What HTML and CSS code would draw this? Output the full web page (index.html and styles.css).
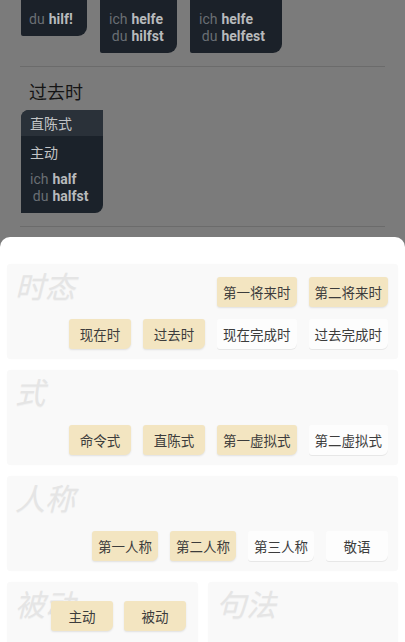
FILE: index.html
```html
<!DOCTYPE html>
<html lang="zh">
<head>
<meta charset="utf-8">
<title>Konjugation</title>
<link rel="stylesheet" href="styles.css">
</head>
<body>
<div class="page">
  <div class="top">
    <div class="forms">
      <div class="fcard c1">
        <div class="conj"><span class="pr">du</span><span class="vb">hilf!</span></div>
      </div>
      <div class="fcard c2">
        <div class="conj"><span class="pr">ich</span><span class="vb">helfe</span><span class="pr">du</span><span class="vb">hilfst</span></div>
      </div>
      <div class="fcard c3">
        <div class="conj"><span class="pr">ich</span><span class="vb">helfe</span><span class="pr">du</span><span class="vb">helfest</span></div>
      </div>
    </div>
    <div class="sep"></div>
    <h2 class="tense">过去时</h2>
    <div class="mood">
      <div class="mood-head">直陈式</div>
      <div class="voice">
        <div class="voice-name">主动</div>
        <div class="conj"><span class="pr">ich</span><span class="vb">half</span><span class="pr">du</span><span class="vb">halfst</span></div>
      </div>
    </div>
    <div class="sep sep2"></div>
  </div>

  <div class="sheet">
    <section class="card tall">
      <div class="card-title">时态</div>
      <div class="chips">
        <span class="chip on">现在时</span>
        <span class="chip on">过去时</span>
        <span class="chip">现在完成时</span>
        <span class="chip">过去完成时</span>
        <span class="chip on">第一将来时</span>
        <span class="chip on">第二将来时</span>
      </div>
    </section>
    <section class="card tall">
      <div class="card-title">式</div>
      <div class="chips">
        <span class="chip on">命令式</span>
        <span class="chip on">直陈式</span>
        <span class="chip on">第一虚拟式</span>
        <span class="chip">第二虚拟式</span>
      </div>
    </section>
    <section class="card tall">
      <div class="card-title">人称</div>
      <div class="chips">
        <span class="chip on">第一人称</span>
        <span class="chip on">第二人称</span>
        <span class="chip">第三人称</span>
        <span class="chip">敬语</span>
      </div>
    </section>
    <div class="pair">
      <section class="card short">
        <div class="card-title">被动</div>
        <div class="chips chips-mid">
          <span class="chip on">主动</span>
          <span class="chip on">被动</span>
        </div>
      </section>
      <section class="card short">
        <div class="card-title">句法</div>
      </section>
    </div>
  </div>
</div>
</body>
</html>
```
FILE: styles.css
```css
html, body {
  margin: 0;
  padding: 0;
}
body {
  width: 405px;
  height: 642px;
  overflow: hidden;
  background: #7b7b7b;
  font-family: Roboto, "Noto Sans CJK SC", sans-serif;
}
.page {
  display: flex;
  flex-direction: column;
  height: 642px;
}

/* dimmed page behind the sheet */
.top {
  height: 237px;
  flex: none;
  box-sizing: border-box;
  padding: 0 20px 0 21px;
  overflow: hidden;
}
.forms {
  display: flex;
  align-items: flex-start;
  gap: 13px;
}
.fcard {
  box-sizing: border-box;
  background: #1b2129;
  border-radius: 0 0 9px 2px;
  padding: 11px 8px 8px 9px;
}
.c1 { width: 66px; padding-left: 8px; }
.c2 { width: 77px; }
.c3 { width: 92px; }

.conj {
  display: grid;
  grid-template-columns: auto auto;
  justify-content: start;
  column-gap: 4px;
  font-size: 14px;
  line-height: 17px;
}
.pr {
  color: #6a6f74;
  text-align: right;
}
.vb {
  color: #b8babc;
  font-weight: 700;
}

.sep {
  height: 1px;
  background: #6b6b6b;
  margin: 13px 0 0 -1px;
}
.tense {
  margin: 12px 0 0 8px;
  font-family: "Noto Sans CJK SC", sans-serif;
  font-size: 18px;
  line-height: 24px;
  font-weight: 400;
  color: #151515;
}
.mood {
  margin-top: 7px;
  width: 82px;
  background: #1b222a;
  border-radius: 8px 0 8px 0;
  overflow: hidden;
}
.mood-head {
  height: 26px;
  line-height: 26px;
  padding-left: 9px;
  background: #2a3139;
  color: #c2c4c6;
  font-family: "Noto Sans CJK SC", sans-serif;
  font-size: 14px;
}
.voice {
  padding: 8px 0 8px 9px;
}
.voice-name {
  font-family: "Noto Sans CJK SC", sans-serif;
  font-size: 14px;
  line-height: 17px;
  color: #c2c4c6;
  margin-bottom: 10px;
}

/* bottom sheet */
.sheet {
  flex: 1;
  background: #ffffff;
  border-radius: 10px 10px 0 0;
  padding: 27px 7px 0;
  display: flex;
  flex-direction: column;
  gap: 11px;
  font-family: "Noto Sans CJK SC", sans-serif;
}
.card {
  display: grid;
  background: #f9f9f9;
  border-radius: 4px;
  box-shadow: 0 0 1px rgba(0, 0, 0, 0.04);
}
.card.tall { min-height: 95px; }
.card.short { min-height: 80px; }
.card-title,
.chips {
  grid-area: 1 / 1;
}
.card-title {
  align-self: start;
  justify-self: start;
  padding: 6px 0 0 8px;
  font-size: 30px;
  line-height: 30px;
  font-style: italic;
  color: #e5e5e5;
  text-shadow: 0 1px 0 #f1f1f1;
}
.chips {
  align-self: end;
  display: flex;
  flex-wrap: wrap-reverse;
  justify-content: flex-end;
  gap: 12px;
  padding: 12px 10px 10px 10px;
}
.chips-mid {
  align-self: start;
  padding: 19px 12px 0 10px;
  gap: 11px;
}
.chip {
  box-sizing: border-box;
  min-width: 62px;
  height: 30px;
  line-height: 30px;
  padding: 0 6px;
  text-align: center;
  font-size: 13.5px;
  color: #3c3c3c;
  background: #fdfdfd;
  border-radius: 3px 3px 6px 3px;
  box-shadow: 0 1px 0 rgba(0, 0, 0, 0.07);
}
.chip.on {
  background: #f3e5c1;
  box-shadow: 0 1px 2px rgba(0, 0, 0, 0.1);
}

.pair {
  display: grid;
  grid-template-columns: 191px 1fr;
  gap: 10px;
}
```
